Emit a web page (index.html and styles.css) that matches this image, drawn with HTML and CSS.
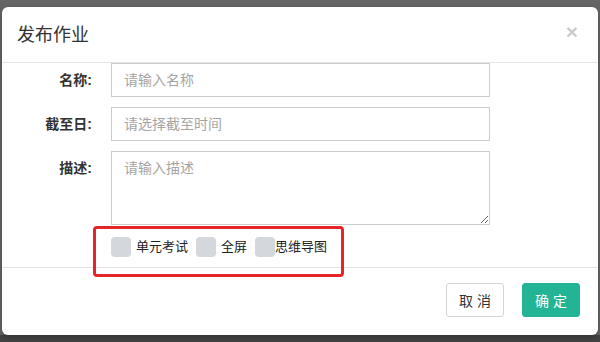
FILE: index.html
```html
<!DOCTYPE html>
<html lang="zh-CN">

<head>
    <meta charset="UTF-8">
    <title>发布作业</title>
    <link rel="stylesheet" href="styles.css">
</head>

<body>
    <div class="modal">
        <div class="modal-header">
            <h4 class="modal-title">发布作业</h4>
            <span class="close">&times;</span>
        </div>
        <div class="modal-body">
            <div class="form-row">
                <label class="label">名称:</label>
                <input class="inp" type="text" placeholder="请输入名称">
            </div>
            <div class="form-row">
                <label class="label">截至日:</label>
                <input class="inp" type="text" placeholder="请选择截至时间">
            </div>
            <div class="form-row">
                <label class="label">描述:</label>
                <textarea class="inp area" placeholder="请输入描述"></textarea>
            </div>
            <div class="checks">
                <span class="chk"></span><span class="chk-text">单元考试</span>
                <span class="chk"></span><span class="chk-text">全屏</span>
                <span class="chk"></span><span class="chk-text tight">思维导图</span>
            </div>
        </div>
        <div class="modal-footer">
            <button class="btn btn-cancel">取 消</button>
            <button class="btn btn-ok">确 定</button>
        </div>
        <div class="mark"></div>
    </div>
</body>

</html>
```

FILE: styles.css
```css
* {
    padding: 0;
    margin: 0;
    box-sizing: border-box;
}

body {
    width: 600px;
    height: 342px;
    overflow: hidden;
    padding: 7px 2px 0;
    background: linear-gradient(#666 0, #666 335px, #434343 335px);
    font-family: "Liberation Sans", "Noto Sans CJK SC", sans-serif;
    color: #333;
}

.modal {
    position: relative;
    width: 596px;
    height: 328px;
    background-color: #fff;
    border-radius: 6px;
    box-shadow: 0 2px 6px rgba(0, 0, 0, 0.3);
}

.modal-header {
    height: 56px;
    border-bottom: 1px solid #e5e5e5;
    display: flex;
    align-items: center;
    justify-content: space-between;
    padding: 0 20px 0 15px;
}

.modal-title {
    font-size: 18px;
    font-weight: normal;
    color: #333;
    line-height: 20px;
}

.close {
    font-size: 21px;
    font-weight: bold;
    color: #000;
    opacity: 0.2;
    line-height: 1;
    margin-top: -6px;
}

.modal-body {
    height: 204px;
}

.form-row {
    display: flex;
    align-items: flex-start;
    margin-bottom: 10px;
}

.label {
    width: 90px;
    margin-right: 19px;
    text-align: right;
    font-size: 14px;
    font-weight: bold;
    line-height: 20px;
    padding-top: 7px;
    color: #333;
}

.inp {
    width: 379px;
    height: 34px;
    border: 1px solid #ccc;
    padding: 6px 12px;
    font-size: 14px;
    font-family: "Liberation Sans", "Noto Sans CJK SC", sans-serif;
    line-height: 20px;
    outline: none;
    color: #555;
}

.inp::placeholder {
    color: #a5a5a5;
}

.area {
    height: 74px;
    resize: vertical;
}

.checks {
    display: flex;
    align-items: center;
    margin-top: -9px;
    padding: 11px 0 0 109px;
    font-size: 13px;
    line-height: 20px;
}

.chk {
    width: 20px;
    height: 20px;
    border-radius: 4px;
    background-color: #d4d8dc;
}

.chk-text {
    margin: 0 8px 0 5px;
    color: #222;
}

.chk-text.tight {
    margin-left: 0;
}

.modal-footer {
    border-top: 1px solid #e5e5e5;
    display: flex;
    justify-content: flex-end;
    gap: 18px;
    padding: 15px 18px 0;
}

.btn {
    width: 58px;
    height: 34px;
    border-radius: 3px;
    font-size: 14px;
    font-family: "Liberation Sans", "Noto Sans CJK SC", sans-serif;
}

.btn-cancel {
    background-color: #fff;
    border: 1px solid #d5d5d5;
    color: #333;
}

.btn-ok {
    background-color: #23b395;
    border: 1px solid #23b395;
    color: #fff;
}

/* 标注框 */
.mark {
    position: absolute;
    left: 91px;
    top: 219px;
    width: 251px;
    height: 51px;
    border: 3px solid #e5252a;
    border-radius: 4px;
}
```
